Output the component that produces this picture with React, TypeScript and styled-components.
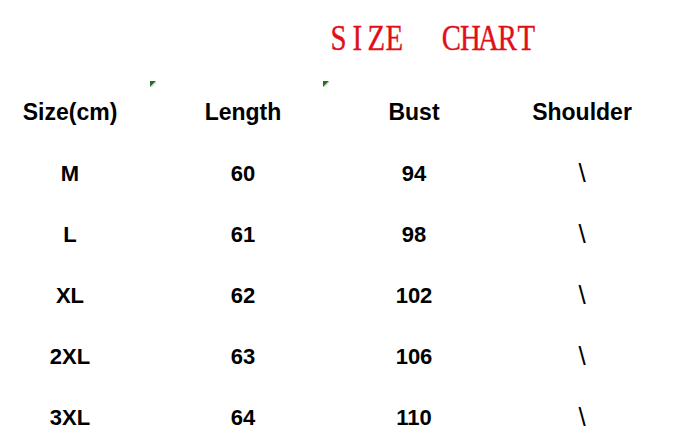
import styled, { createGlobalStyle } from "styled-components";

const GlobalStyle = createGlobalStyle`
  html, body {
    margin: 0;
    padding: 0;
    background: #fff;
  }
`;

const Page = styled.div`
  width: 689px;
  height: 448px;
  overflow: hidden;
  background: #fff;
  font-family: "Liberation Sans", Arial, sans-serif;
  color: #000;
`;

const Top = styled.header`
  display: flex;
  flex-direction: column;
  height: 82px;
`;

const Title = styled.h1`
  display: flex;
  margin: 0;
  padding: 18px 0 0 329px;
  height: 40px;
  font-family: "Liberation Serif", "Times New Roman", serif;
  font-weight: 400;
  font-size: 36px;
  line-height: 40px;
  color: #e0101a;
  -webkit-text-stroke: 0.4px #e0101a;
`;

// the title font is a fixed-pitch face with narrow letters
const Glyph = styled.span`
  display: inline-flex;
  justify-content: center;
  width: 18.8px;
  transform: scaleX(0.8);
  white-space: pre;
`;

const Marks = styled.div`
  display: flex;
  margin-top: 23px;
  padding-left: 150px;
  gap: 167px;
  height: 1px;
  overflow: visible;
`;

const Mark = () => (
  <svg width="6" height="6" viewBox="0 0 6 6" style={{ flex: "none" }}>
    <polygon points="0,0 6,0 0,6" fill="#2f6a2a" />
    <polygon points="6,0 6,2 2,6 0,6" fill="#9fd39a" opacity="0.5" />
  </svg>
);

const Table = styled.div`
  display: grid;
  grid-template-columns: 140px 206px 136px 200px;
  grid-auto-rows: 61px;
`;

const Cell = styled.div<{ $head?: boolean; $thin?: boolean }>`
  display: flex;
  align-items: center;
  justify-content: center;
  font-size: ${({ $head, $thin }) => ($head ? 23 : $thin ? 26 : 22)}px;
  font-weight: ${({ $thin }) => ($thin ? 400 : 700)};
`;

const title = "SIZE  CHART";
const headers = ["Size(cm)", "Length", "Bust", "Shoulder"];

const rows = [
  { size: "M", length: 60, bust: 94 },
  { size: "L", length: 61, bust: 98 },
  { size: "XL", length: 62, bust: 102 },
  { size: "2XL", length: 63, bust: 106 },
  { size: "3XL", length: 64, bust: 110 },
];

const App = () => {
  return (
    <Page>
      <GlobalStyle />
      <Top>
        <Title>
          {title.split("").map((ch, i) => (
            <Glyph key={i}>{ch}</Glyph>
          ))}
        </Title>
        <Marks>
          <Mark />
          <Mark />
        </Marks>
      </Top>
      <Table>
        {headers.map((h) => (
          <Cell key={h} $head>
            {h}
          </Cell>
        ))}
        {rows.map((r) => [
          <Cell key={r.size + "s"}>{r.size}</Cell>,
          <Cell key={r.size + "l"}>{r.length}</Cell>,
          <Cell key={r.size + "b"}>{r.bust}</Cell>,
          <Cell key={r.size + "h"} $thin>
            \
          </Cell>,
        ])}
      </Table>
    </Page>
  );
};

export default App;
